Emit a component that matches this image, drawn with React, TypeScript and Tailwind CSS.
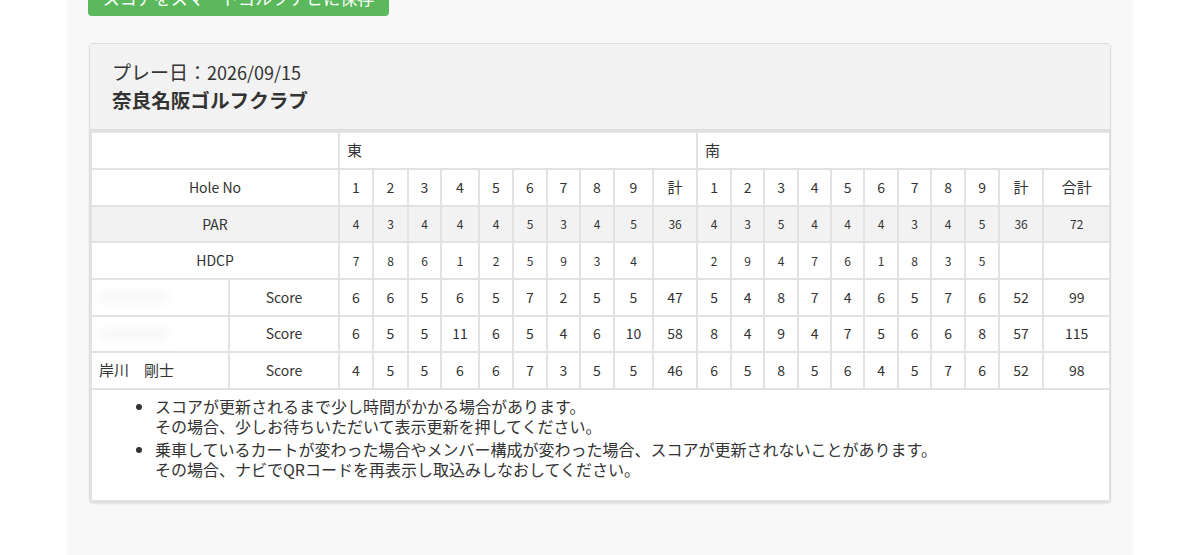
import React from "react";

const widths = [138, 110, 34, 35, 33, 38, 34, 34, 33, 34, 39, 44, 34, 33, 34, 33, 33, 34, 33, 34, 34, 44, 67];

const parE = [4, 3, 4, 4, 4, 5, 3, 4, 5];
const parS = [4, 3, 5, 4, 4, 4, 3, 4, 5];
const hdE = [7, 8, 6, 1, 2, 5, 9, 3, 4];
const hdS = [2, 9, 4, 7, 6, 1, 8, 3, 5];

const players = [
  { name: "", blur: true, e: [6, 6, 5, 6, 5, 7, 2, 5, 5], et: 47, s: [5, 4, 8, 7, 4, 6, 5, 7, 6], st: 52, t: 99 },
  { name: "", blur: true, e: [6, 5, 5, 11, 6, 5, 4, 6, 10], et: 58, s: [8, 4, 9, 4, 7, 5, 6, 6, 8], st: 57, t: 115 },
  { name: "岸川　剛士", blur: false, e: [4, 5, 5, 6, 6, 7, 3, 5, 5], et: 46, s: [6, 5, 8, 5, 6, 4, 5, 7, 6], st: 52, t: 98 },
];

const td = "border-2 border-[#e2e2e2] text-center align-middle p-0";

export default function App() {
  return (
    <div className="min-h-[555px] overflow-hidden bg-white font-['Noto_Sans_CJK_JP','Noto_Sans',sans-serif] text-[#333]">
      <div className="mx-auto -mt-[20px] w-[1066px] bg-[#f8f8f8] px-[22px] pb-[60px]">
        <button className="h-[36px] w-[301px] -ml-px rounded-[4px] bg-[#5cb85c] text-[17px] text-white">
          スコアをスマートゴルフナビに保存
        </button>
        <div className="mt-[27px] overflow-hidden rounded-[4px] border border-[#dcdcdc] bg-white shadow-[0_1px_2px_rgba(0,0,0,0.08)]">
          <div className="border-b-2 border-[#dedede] bg-[#f2f2f2] px-[22px] pb-[16px] pt-[14px] text-[19px] leading-[27px]">
            <div>
              プレー日：<span className="text-[18px]">2026/09/15</span>
            </div>
            <div className="text-[19.6px] font-bold">奈良名阪ゴルフクラブ</div>
          </div>
          <table className="w-[1020px] table-fixed border-collapse text-[14px]">
            <colgroup>
              {widths.map((w, i) => (
                <col key={i} style={{ width: w }} />
              ))}
            </colgroup>
            <tbody>
              <tr className="h-[37px]">
                <td colSpan={2} className={td}></td>
                <td colSpan={10} className={td + " !text-left pl-[7px] text-[15px]"}>東</td>
                <td colSpan={11} className={td + " !text-left pl-[7px] text-[15px]"}>南</td>
              </tr>
              <tr className="h-[37px]">
                <td colSpan={2} className={td}>Hole No</td>
                {[1, 2, 3, 4, 5, 6, 7, 8, 9].map((n) => (
                  <td key={"e" + n} className={td}>{n}</td>
                ))}
                <td className={td + " text-[15px]"}>計</td>
                {[1, 2, 3, 4, 5, 6, 7, 8, 9].map((n) => (
                  <td key={"s" + n} className={td}>{n}</td>
                ))}
                <td className={td + " text-[15px]"}>計</td>
                <td className={td + " text-[15px]"}>合計</td>
              </tr>
              <tr className="h-[36px] bg-[#f2f2f2]">
                <td colSpan={2} className={td}>PAR</td>
                {parE.map((n, i) => (
                  <td key={"pe" + i} className={td + " text-[12px]"}>{n}</td>
                ))}
                <td className={td + " text-[12px]"}>36</td>
                {parS.map((n, i) => (
                  <td key={"ps" + i} className={td + " text-[12px]"}>{n}</td>
                ))}
                <td className={td + " text-[12px]"}>36</td>
                <td className={td + " text-[12px]"}>72</td>
              </tr>
              <tr className="h-[37px]">
                <td colSpan={2} className={td}>HDCP</td>
                {hdE.map((n, i) => (
                  <td key={"he" + i} className={td + " text-[12px]"}>{n}</td>
                ))}
                <td className={td}></td>
                {hdS.map((n, i) => (
                  <td key={"hs" + i} className={td + " text-[12px]"}>{n}</td>
                ))}
                <td className={td}></td>
                <td className={td}></td>
              </tr>
              {players.map((p, pi) => (
                <tr key={pi} className="h-[36.5px]">
                  <td className={td + " !text-left pl-[7px] text-[15px]"}>
                    {p.blur ? (
                      <div className="h-[12px] w-[70px] rounded-full bg-[#f7f7f7] blur-[4px]"></div>
                    ) : (
                      p.name
                    )}
                  </td>
                  <td className={td}>Score</td>
                  {p.e.map((n, i) => (
                    <td key={"se" + i} className={td}>{n}</td>
                  ))}
                  <td className={td}>{p.et}</td>
                  {p.s.map((n, i) => (
                    <td key={"ss" + i} className={td}>{n}</td>
                  ))}
                  <td className={td}>{p.st}</td>
                  <td className={td}>{p.t}</td>
                </tr>
              ))}
              <tr>
                <td colSpan={23} className="border-2 border-[#e2e2e2] px-[8px] pb-[21px] pt-[6px]">
                  <ul className="list-disc pl-[55px] text-[16px] leading-[20px]">
                    <li className="mb-[3px]">
                      スコアが更新されるまで少し時間がかかる場合があります。
                      <br />
                      その場合、少しお待ちいただいて表示更新を押してください。
                    </li>
                    <li>
                      乗車しているカートが変わった場合やメンバー構成が変わった場合、スコアが更新されないことがあります。
                      <br />
                      その場合、ナビでQRコードを再表示し取込みしなおしてください。
                    </li>
                  </ul>
                </td>
              </tr>
            </tbody>
          </table>
        </div>
      </div>
    </div>
  );
}
